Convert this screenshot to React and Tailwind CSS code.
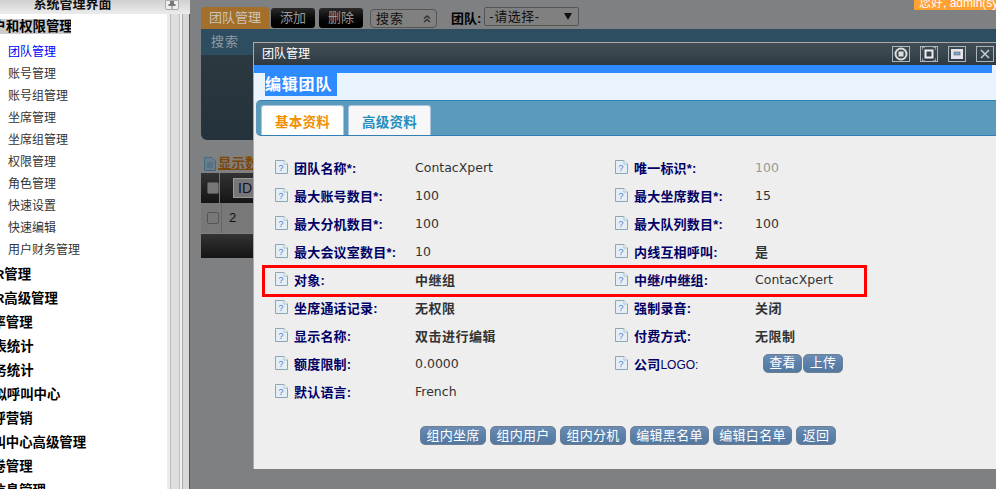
const cjk = "font-['Liberation_Sans','Noto_Sans_CJK_SC',sans-serif]"

const subItems = ['团队管理', '账号管理', '账号组管理', '坐席管理', '坐席组管理', '权限管理', '角色管理', '快速设置', '快速编辑', '用户财务管理']

// these are cut off by the left edge in the screenshot, so each has its own offset
const menuItems = [
  { text: 'IVR管理', ml: 'ml-[-18px]' },
  { text: 'IVR高级管理', ml: 'ml-[-18px]' },
  { text: '费率管理', ml: 'ml-[-21px]' },
  { text: '报表统计', ml: 'ml-[-20px]' },
  { text: '业务统计', ml: 'ml-[-20px]' },
  { text: '虚拟呼叫中心', ml: 'ml-[-20px]' },
  { text: '外呼营销', ml: 'ml-[-21px]' },
  { text: '呼叫中心高级管理', ml: 'ml-[-21px]' },
  { text: '问卷管理', ml: 'ml-[-21px]' },
  { text: '短信息管理', ml: 'ml-[-21px]' },
]

const fields = [
  ['团队名称*:', 'ContacXpert'], ['唯一标识*:', '100', 'muted'],
  ['最大账号数目*:', '100'], ['最大坐席数目*:', '15'],
  ['最大分机数目*:', '100'], ['最大队列数目*:', '100'],
  ['最大会议室数目*:', '10'], ['内线互相呼叫:', '是'],
  ['对象:', '中继组'], ['中继/中继组:', 'ContacXpert'],
  ['坐席通话记录:', '无权限'], ['强制录音:', '关闭'],
  ['显示名称:', '双击进行编辑'], ['付费方式:', '无限制'],
  ['额度限制:', '0.0000'], ['公司LOGO:', null],
  ['默认语言:', 'French'],
]

const bottomButtons = [
  ['组内坐席', 'w-[66px]'], ['组内用户', 'w-[66px]'], ['组内分机', 'w-[66px]'],
  ['编辑黑名单', 'w-[79px]'], ['编辑白名单', 'w-[79px]'], ['返回', 'w-[40px]'],
]

function HelpIcon() {
  return (
    <svg width="13" height="14" viewBox="0 0 13 14" className="shrink-0">
      <path d="M0.5 0.5H9L12.5 4V13.5H0.5Z" fill="#e4eef5" stroke="#8fa5b5" />
      <path d="M9 0.5V4H12.5" fill="#fff" stroke="#a9bbc8" />
      <text x="6" y="11" fontSize="9" textAnchor="middle" fill="#4a7fd0" fontFamily="Liberation Sans">?</text>
    </svg>
  )
}

function BlueButton({ className, children }) {
  return (
    <div className={`h-[19px] flex items-center justify-center rounded-[5px] border border-[#6d7f93] bg-gradient-to-b from-[#6b8db5] via-[#5a80aa] to-[#54789f] text-white text-[13px] tracking-[0.3px] ${className}`}>
      {children}
    </div>
  )
}

function Field({ label, value, muted }) {
  const isLatin = value && /^[\x00-\x7f]+$/.test(value)
  return (
    <div className="h-[28px] flex items-center">
      <div className="w-[19px] -mt-[5px]"><HelpIcon /></div>
      <div className="w-[121px] font-bold text-[13px] tracking-[0.2px] text-[#000066] whitespace-nowrap">
        {label.startsWith('公司') ? <>公司<span className="font-normal text-[12px] tracking-normal">LOGO:</span></> : label}
      </div>
      {value === null && (
        <div className="flex ml-[8px] gap-px -mt-[4px]">
          <BlueButton className="w-[39px]">查看</BlueButton>
          <BlueButton className="w-[40px]">上传</BlueButton>
        </div>
      )}
      {value !== null && (
        <div className={`${isLatin ? "font-['DejaVu_Sans',sans-serif] text-[12.5px]" : 'text-[13px] font-bold tracking-[0.5px]'} ${muted ? 'text-[#999]' : 'text-[#333]'} -mt-[1px]`}>
          {value}
        </div>
      )}
    </div>
  )
}

function WinButton({ children }) {
  return (
    <div className="w-[18px] h-[16px] border border-[#a9b4bd] flex items-center justify-center">
      {children}
    </div>
  )
}

function Sidebar() {
  return (
    <div className="w-[190px] h-full flex flex-col shrink-0 bg-[#d8d8d8]">
      <div className="h-[14px] shrink-0 bg-gradient-to-b from-[#d0d0d0] to-[#ececec] relative overflow-hidden flex">
        <div className="w-[145px] mr-[20px] text-center font-bold text-[13px] leading-[13px] -mt-[3px] text-[#111]">系统管理界面</div>
        <div className="w-[14px] h-[10px] border border-[#aaa] rounded-b-[2px] bg-[#eee] flex justify-center">
          <svg width="8" height="8" viewBox="0 0 8 8"><path d="M2 0H6V3H7.5V5H4.5V8H3.5V5H.5V3H2Z" fill="#777" /></svg>
        </div>
      </div>
      <div className="flex-1 flex min-h-0">
        <div className="w-[167px] bg-white overflow-hidden">
          <div className="pt-[5px] h-[19px] box-content">
            <div className="w-[71px] h-[15px] bg-[#cccccc] overflow-hidden whitespace-nowrap">
              <div className="ml-[-21px] font-bold text-[13.4px] leading-[15px] text-black">用户和权限管理</div>
            </div>
          </div>
          <div className="pt-[3px]">
            {subItems.map((t, i) => (
              <div key={t} className={`h-[22px] leading-[22px] pl-[8px] text-[12px] ${i === 0 ? 'text-[#0000ff]' : 'text-[#333]'}`}>{t}</div>
            ))}
          </div>
          <div className="pt-[2px]">
            {menuItems.map(m => (
              <div key={m.text} className={`h-[24px] leading-[24px] font-bold text-[13.4px] text-black whitespace-nowrap ${m.ml}`}>{m.text}</div>
            ))}
          </div>
        </div>
        <div className="w-[3px] bg-[#ececec]" />
        <div className="w-[10px] bg-[#dedede] border-x border-[#bdbdbd]" />
        <div className="w-[2px] bg-[#f0f0f0]" />
        <div className="w-[1px] bg-[#a8a8a8]" />
        <div className="flex-1 bg-[#d8d8d8]" />
        <div className="w-[1px] bg-[#555]" />
      </div>
    </div>
  )
}

function Background() {
  return (
    <div className="pt-[7px] pl-[11px] h-full text-[#aaa]">
      <div className="flex items-start h-[22px]">
        <div className="w-[68px] h-[22px] rounded-t-[4px] bg-[#a46f2a] text-[13px] text-[#c9c4b8] flex items-center justify-center">团队管理</div>
        <div className="ml-[2px] mt-[1px] w-[44px] h-[20px] rounded-[3px] bg-gradient-to-b from-[#2b2b2b] to-[#000] text-[13px] text-[#999] flex items-center justify-center">添加</div>
        <div className="ml-[4px] mt-[1px] w-[44px] h-[20px] rounded-[3px] bg-gradient-to-b from-[#2b2b2b] to-[#000] text-[13px] text-[#999] flex items-center justify-center">删除</div>
        <div className="ml-[7px] mt-[2px] w-[67px] h-[19px] rounded-[4px] border border-[#555] bg-[#808080] text-[13px] text-[#111] flex items-center justify-between pl-[5px] pr-[4px] tracking-[1px]">
          搜索
          <svg width="10" height="10" viewBox="0 0 10 10"><path d="M2 4.5L5 2L8 4.5M2 8L5 5.5L8 8" fill="none" stroke="#333" strokeWidth="1.5" /></svg>
        </div>
        <div className="ml-[14px] mt-[2px] font-bold text-[13px] text-black">团队:</div>
        <div className="ml-[3px] w-[95px] h-[19px] border border-[#555] rounded-[2px] bg-[#808080] text-[13px] text-[#111] flex items-center justify-between pl-[4px] pr-[6px] tracking-[0.5px]">
          -请选择-
          <svg width="8" height="7" viewBox="0 0 8 7"><path d="M0 0H8L4 7Z" fill="#111" /></svg>
        </div>
      </div>
      <div className="h-[111px] rounded-bl-[6px] bg-gradient-to-b from-[#2f3a41] to-[#24323b] overflow-hidden">
        <div className="h-[26px] bg-[#2d4d60] pl-[10px] leading-[26px] text-[13px] text-[#8f9ba3] tracking-[1px]">搜索</div>
      </div>
      <div className="h-[33px] flex items-center pl-[3px] pt-[15px] gap-[2px]">
        <svg width="12" height="14" viewBox="0 0 12 14"><path d="M.5.5H8L11.5 4V13.5H.5Z" fill="#6d7d88" stroke="#3d6a8a" /><path d="M3 6H9M3 8H9M3 10H9" stroke="#3d6a8a" /></svg>
        <span className="font-bold text-[13.5px] text-[#7c4708] underline whitespace-nowrap">显示数据列表</span>
      </div>
      <div className="w-[60px]">
        <div className="h-[30px] flex bg-gradient-to-b from-[#333] to-[#151515]">
          <div className="w-[21px] border-r border-[#777] flex items-center pl-[6px]">
            <div className="w-[12px] h-[12px] rounded-[2px] bg-[#777] border border-[#555]" />
          </div>
          <div className="flex-1 pl-[13px] flex items-center">
            <div className="h-[20px] w-[30px] bg-[#777] border border-[#999] pl-[4px] leading-[18px] text-[14px] text-[#101030]">ID</div>
          </div>
        </div>
        <div className="h-[30px] flex bg-[#787878] text-[13px] text-[#101010]">
          <div className="w-[21px] border-r border-[#666] flex items-center pl-[6px]">
            <div className="w-[12px] h-[12px] rounded-[2px] border border-[#555]" />
          </div>
          <div className="pl-[7px] leading-[30px]">2</div>
        </div>
        <div className="h-[24px] mt-px bg-gradient-to-b from-[#333] to-[#151515]" />
      </div>
    </div>
  )
}

function EditWindow() {
  return (
    <div className="absolute left-[63px] top-[42px] w-[743px] h-[427px] bg-[#eeeeee] border-l border-t border-[#aaa] flex flex-col">
      <div className="h-[22px] shrink-0 bg-gradient-to-b from-[#414d55] via-[#3a464e] to-[#2d3840] flex items-center justify-between pl-[8px] pr-[2px] text-[12px] text-white">
        <span>团队管理</span>
        <div className="flex gap-[10px]">
          <WinButton>
            <svg width="14" height="14" viewBox="0 0 14 14"><circle cx="7" cy="7" r="5.5" fill="none" stroke="#ddd" strokeWidth="2" /><rect x="4.5" y="4.5" width="5" height="5" fill="#ddd" /></svg>
          </WinButton>
          <WinButton>
            <svg width="14" height="14" viewBox="0 0 14 14"><rect x="3.5" y="3.5" width="7" height="7" fill="none" stroke="#eee" strokeWidth="2" /><path d="M0 3V0H3M11 0H14V3M14 11V14H11M3 14H0V11" fill="none" stroke="#ccc" /></svg>
          </WinButton>
          <WinButton>
            <svg width="14" height="12" viewBox="0 0 14 12"><rect x="1" y="1" width="12" height="10" fill="#e4e4ea" /><rect x="4" y="4" width="6" height="3" fill="#7fa8cc" stroke="#555" strokeWidth="0.5" /></svg>
          </WinButton>
          <WinButton>
            <svg width="10" height="10" viewBox="0 0 10 10"><path d="M1 1L9 9M9 1L1 9" stroke="#c5d0da" strokeWidth="1.5" /></svg>
          </WinButton>
        </div>
      </div>
      <div className="h-[35px] shrink-0 bg-[#eaf4ff]">
        <div className="h-[8px] w-[738px] bg-[#2e8bff]" />
        <div className="ml-[11px] w-[72px] h-[23px] bg-[#2e8bff] text-white font-bold text-[16px] leading-[23px] tracking-[0.8px] whitespace-nowrap">编辑团队</div>
      </div>
      <div className="ml-[2px] h-[36px] shrink-0 rounded-l-[5px] bg-[#5b9aba] border-y border-[#2f7fb8] flex items-end gap-[4px] pl-[5px]">
        <div className="w-[83px] h-[30px] rounded-t-[3px] bg-white border-x border-t border-[#a9c3e0] flex items-center justify-center pt-[5px] font-bold text-[13.5px] text-[#f09000] tracking-[0.3px]">基本资料</div>
        <div className="w-[83px] h-[30px] rounded-t-[3px] bg-[#f7f7f7] border-x border-t border-[#a9c3e0] flex items-center justify-center pt-[5px] font-bold text-[13.5px] text-[#1f8fc0] tracking-[0.3px]">高级资料</div>
      </div>
      <div className="pl-[21px] pt-[19px]">
        <div className="grid grid-cols-[340px_340px]">
          {fields.map(([label, value, muted]) => (
            <Field key={label} label={label} value={value} muted={muted} />
          ))}
        </div>
        <div className="flex gap-[4px] pl-[145px] mt-[19px]">
          {bottomButtons.map(([t, w]) => <BlueButton key={t} className={w}>{t}</BlueButton>)}
        </div>
      </div>
      {/* red marker drawn over the screenshot */}
      <div className="absolute left-[8px] top-[222px] w-[605px] h-[32px] border-[3px] border-[#ff0000]" />
    </div>
  )
}

export default function App() {
  return (
    <div className={`relative w-[996px] h-[489px] overflow-hidden flex ${cjk}`}>
      <Sidebar />
      <div className="relative flex-1 bg-[#7f8081] overflow-hidden">
        <Background />
        <div className="absolute right-0 top-0 w-[82px] h-[10px] bg-[#ffa033] overflow-hidden whitespace-nowrap pl-[5px] text-white text-[12px] leading-[12px]">
          <div className="-mt-[3px]">您好, admin(sy</div>
        </div>
        <EditWindow />
      </div>
    </div>
  )
}
